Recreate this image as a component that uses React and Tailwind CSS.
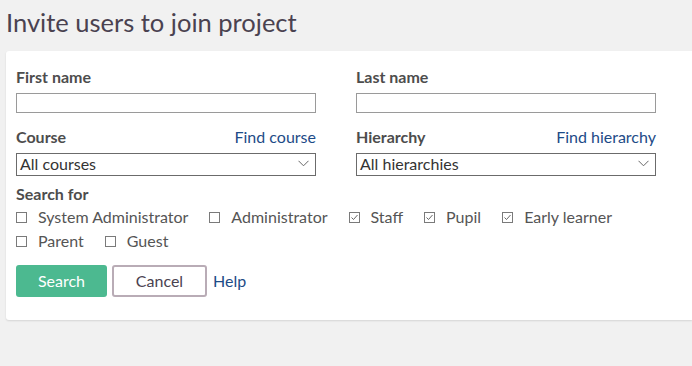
import React from 'react';

const roles = [
  { label: 'System Administrator', checked: false },
  { label: 'Administrator', checked: false },
  { label: 'Staff', checked: true },
  { label: 'Pupil', checked: true },
  { label: 'Early learner', checked: true },
  { label: 'Parent', checked: false },
  { label: 'Guest', checked: false },
];

const Checkbox = ({ checked }) => (
  <span className="w-[11px] h-[11px] border border-[#7a7a7a] bg-white flex items-center justify-center shrink-0">
    {checked && (
      <svg width="9" height="9" viewBox="0 0 9 9" fill="none">
        <path d="M1.5 4.5 L3.5 6.5 L7.5 2" stroke="#555" strokeWidth="0.9" />
      </svg>
    )}
  </span>
);

const Chevron = () => (
  <svg width="11" height="7" viewBox="0 0 11 7" fill="none" className="shrink-0">
    <path d="M0.5 0.8 L5.5 5.8 L10.5 0.8" stroke="#666" strokeWidth="1" />
  </svg>
);

const Field = ({ label, link, children }) => (
  <div className="w-[300px]">
    <div className="flex items-baseline justify-between h-[17px] leading-[17px] mb-[8px]">
      <span className="font-bold text-[16px] text-[#4d4d4d]">{label}</span>
      {link && <a className="text-[16px] text-[#1d4b87]">{link}</a>}
    </div>
    {children}
  </div>
);

const SelectBox = ({ value }) => (
  <div className="h-[23px] border border-[#6b6b6b] bg-white flex items-center justify-between pl-[3px] pr-[6px] pb-[2px] text-[16px] text-[#333]">
    <span>{value}</span>
    <Chevron />
  </div>
);

export default function App() {
  return (
    <div className="min-h-[366px] bg-[#f1f1f1] overflow-hidden" style={{ fontFamily: 'Lato, "Open Sans", sans-serif' }}>
      <h1 className="pt-[7px] pl-[6px] text-[25.5px] leading-[31px] text-[#4a4250] mb-[13px]">Invite users to join project</h1>
      <div className="ml-[6px] bg-white rounded-l-[3px] shadow-[0_1px_2px_rgba(0,0,0,0.12)] pl-[10px] pt-[17px] pb-[23px]">
        <div className="flex gap-[40px]">
          <Field label="First name">
            <input className="block w-full h-[20px] border border-[#9a9a9a] outline-none" />
          </Field>
          <Field label="Last name">
            <input className="block w-full h-[20px] border border-[#9a9a9a] outline-none" />
          </Field>
        </div>
        <div className="flex gap-[40px] mt-[15px]">
          <Field label="Course" link="Find course">
            <SelectBox value="All courses" />
          </Field>
          <Field label="Hierarchy" link="Find hierarchy">
            <SelectBox value="All hierarchies" />
          </Field>
        </div>
        <div className="mt-[9px] font-bold text-[16px] leading-[17px] text-[#4d4d4d]">Search for</div>
        <div className="flex flex-wrap w-[660px] mt-[3px]">
          {roles.map((r) => (
            <label key={r.label} className="flex items-center gap-[11px] mr-[21px] h-[24px] text-[16px] text-[#555]">
              <Checkbox checked={r.checked} />
              <span>{r.label}</span>
            </label>
          ))}
        </div>
        <div className="flex items-center mt-[12px]">
          <button className="w-[91px] h-[32px] rounded-[3px] bg-[#4cb990] text-white text-[16px]">Search</button>
          <button className="ml-[5px] w-[95px] h-[32px] rounded-[3px] border-2 border-[#b9acb6] bg-white text-[#4a4250] text-[16px]">Cancel</button>
          <a className="ml-[6px] text-[16px] text-[#1d4b87]">Help</a>
        </div>
      </div>
    </div>
  );
}
